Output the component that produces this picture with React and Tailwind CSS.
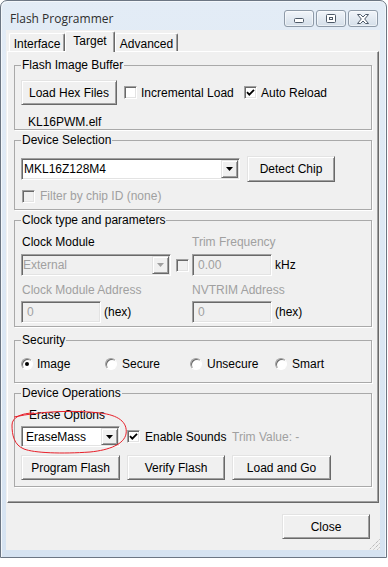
import React from "react";

const raised =
  "bg-[#f0f0f0] border border-t-[#e3e3e3] border-l-[#e3e3e3] border-r-[#696969] border-b-[#696969] shadow-[inset_1px_1px_0_#ffffff,inset_-1px_-1px_0_#a0a0a0]";
const sunken =
  "border border-t-[#a0a0a0] border-l-[#a0a0a0] border-r-white border-b-white shadow-[inset_1px_1px_0_#696969,inset_-1px_-1px_0_#e3e3e3]";

function Button({ className = "", children }) {
  return (
    <div className={`flex items-center justify-center ${raised} ${className}`}>
      {children}
    </div>
  );
}

function Check({ checked = false, disabled = false }) {
  return (
    <div
      className={`w-[13px] h-[13px] shrink-0 flex items-center justify-center ${sunken} ${
        disabled ? "bg-[#f0f0f0]" : "bg-white"
      }`}
    >
      {checked && (
        <svg width="9" height="9" viewBox="0 0 9 9">
          <polyline
            points="1,4.2 3.3,6.6 8,1.8"
            fill="none"
            stroke="#000"
            strokeWidth="1.8"
          />
        </svg>
      )}
    </div>
  );
}

function Radio({ checked = false }) {
  return (
    <div className="w-[12px] h-[12px] shrink-0 rounded-full border border-t-[#a0a0a0] border-l-[#a0a0a0] border-r-white border-b-white shadow-[inset_1px_1px_0_#696969] bg-white flex items-center justify-center">
      {checked && <div className="w-[4px] h-[4px] rounded-full bg-black" />}
    </div>
  );
}

function Arrow({ disabled }) {
  return (
    <svg width="7" height="4" viewBox="0 0 7 4">
      <polygon points="0,0 7,0 3.5,4" fill={disabled ? "#a0a0a0" : "#000"} />
    </svg>
  );
}

function Combo({ className = "", text, disabled = false, pad = "pl-[2px]" }) {
  return (
    <div
      className={`flex ${sunken} ${
        disabled ? "bg-[#f0f0f0] text-[#a0a0a0]" : "bg-white text-black"
      } ${className}`}
    >
      <div className={`flex-1 flex items-center ${pad}`}>{text}</div>
      <div
        className={`w-[17px] my-[1px] mr-[1px] flex items-center justify-center ${raised}`}
      >
        <Arrow disabled={disabled} />
      </div>
    </div>
  );
}

function Input({ className = "", text }) {
  return (
    <div
      className={`flex items-center pl-[5px] bg-[#f0f0f0] text-[#a0a0a0] ${sunken} ${className}`}
    >
      {text}
    </div>
  );
}

function Group({ title, className = "", children }) {
  return (
    <fieldset
      className={`ml-[6px] w-[358px] min-w-0 border border-[#a9a9a9] shadow-[1px_1px_0_#ffffff] ${className}`}
    >
      <legend className="ml-[6px] px-[1px] leading-[14px]">{title}</legend>
      {children}
    </fieldset>
  );
}

function Cap({ children, pad = "" }) {
  return (
    <div
      className={`w-[30px] h-[17px] rounded-[3px] border border-[#8e9aa8] bg-linear-to-b from-[#f1f5fa] to-[#d4dee9] shadow-[inset_0_0_0_1px_rgba(255,255,255,0.55)] flex justify-center ${pad}`}
    >
      {children}
    </div>
  );
}

function Tab({ className = "", children, selected = false }) {
  return (
    <div
      className={`flex justify-center rounded-t-[2px] border-t border-l border-r border-t-white border-l-white border-r-[#696969] bg-[#f0f0f0] ${
        selected
          ? "relative z-10 h-[21px] -mb-[1px] pt-[2px] shadow-[inset_-1px_0_0_#a0a0a0]"
          : "h-[18px] pt-[3px] shadow-[inset_-1px_0_0_#a0a0a0]"
      } ${className}`}
    >
      {children}
    </div>
  );
}

export default function App() {
  return (
    <div className="relative w-[388px] h-[567px] bg-white font-['Liberation_Sans',Arial,sans-serif] text-[12px] leading-[14px] text-black">
      <div className="w-[387px] h-[558px] rounded-t-[7px] border border-[#6c7683] bg-linear-to-b from-[#e3ecf6] to-[#d6e3f1] shadow-[inset_1px_1px_0_#f3f7fb,inset_-1px_0_0_#f3f7fb] flex flex-col">
        {/* title bar */}
        <div className="h-[29px] flex justify-between">
          <div className="pl-[9px] pt-[11px] font-['Open_Sans',sans-serif] text-[12px] leading-[14px] text-[#2e2e2e]">
            Flash Programmer
          </div>
          <div className="mt-[9px] mr-[8px] flex gap-[2px]">
            <Cap pad="items-end pb-[3px]">
              <svg width="10" height="5" viewBox="0 0 10 5">
                <rect x="0.5" y="0.5" width="9" height="4" rx="1" fill="#fff" stroke="#4d5968" />
              </svg>
            </Cap>
            <Cap pad="items-center">
              <svg width="10" height="9" viewBox="0 0 10 9">
                <rect x="0.5" y="0.5" width="9" height="8" rx="1" fill="#fff" stroke="#4d5968" />
                <rect x="3.5" y="3.5" width="3" height="2" fill="none" stroke="#4d5968" />
              </svg>
            </Cap>
            <Cap pad="items-center">
              <svg width="12" height="10" viewBox="0 0 12 10">
                <polygon
                  points="0.5,0.5 3.5,0.5 6,3 8.5,0.5 11.5,0.5 7.7,5 11.5,9.5 8.5,9.5 6,7 3.5,9.5 0.5,9.5 4.3,5"
                  fill="#fff"
                  stroke="#4d5968"
                />
              </svg>
            </Cap>
          </div>
        </div>

        {/* client area */}
        <div className="relative ml-[5px] w-[374px] h-[520px] bg-[#f0f0f0] flex flex-col">
          {/* tabs */}
          <div className="h-[21px] pl-[3px] flex items-end">
            <Tab className="w-[56px]">Interface</Tab>
            <Tab className="w-[50px]" selected>
              Target
            </Tab>
            <Tab className="w-[63px]">Advanced</Tab>
          </div>

          {/* tab panel */}
          <div className="ml-[1px] w-[372px] h-[452px] border border-t-white border-l-white border-r-[#696969] border-b-[#696969] shadow-[inset_-1px_-1px_0_#a0a0a0] flex flex-col">
            <Group title="Flash Image Buffer" className="mt-[6px] h-[72px]">
              <div className="mt-[8px] ml-[6px] h-[25px] flex items-center">
                <Button className="w-[96px] h-[25px]">Load Hex Files</Button>
                <div className="ml-[7px] w-[120px] flex items-center">
                  <Check />
                  <span className="ml-[4px]">Incremental Load</span>
                </div>
                <div className="flex items-center">
                  <Check checked />
                  <span className="ml-[4px]">Auto Reload</span>
                </div>
              </div>
              <div className="mt-[10px] ml-[13px]">KL16PWM.elf</div>
            </Group>

            <Group title="Device Selection" className="mt-[3px] h-[77px]">
              <div className="mt-[9px] ml-[6px] h-[26px] flex items-center">
                <Combo className="w-[219px] h-[22px]" text="MKL16Z128M4" />
                <Button className="ml-[7px] w-[88px] h-[26px]">Detect Chip</Button>
              </div>
              <div className="mt-[7px] ml-[7px] h-[14px] flex items-center">
                <Check disabled />
                <span className="ml-[5px] text-[#a0a0a0]">Filter by chip ID (none)</span>
              </div>
            </Group>

            <Group title="Clock type and parameters" className="mt-[3px] h-[114px]">
              <div className="mt-[8px] ml-[7px] flex">
                <span className="w-[170px]">Clock Module</span>
                <span className="text-[#a0a0a0]">Trim Frequency</span>
              </div>
              <div className="mt-[5px] ml-[6px] h-[22px] flex items-center">
                <Combo className="w-[150px] h-[22px]" text="External" disabled pad="pl-[1px]" />
                <div className="ml-[5px]">
                  <Check disabled />
                </div>
                <Input className="ml-[3px] w-[80px] h-[22px]" text="0.00" />
                <span className="ml-[3px]">kHz</span>
              </div>
              <div className="mt-[7px] ml-[7px] flex text-[#a0a0a0]">
                <span className="w-[170px]">Clock Module Address</span>
                <span>NVTRIM Address</span>
              </div>
              <div className="mt-[4px] ml-[6px] h-[22px] flex items-center">
                <div className="w-[171px] flex items-center">
                  <Input className="w-[80px] h-[22px]" text="0" />
                  <span className="ml-[3px]">(hex)</span>
                </div>
                <Input className="w-[80px] h-[22px]" text="0" />
                <span className="ml-[3px]">(hex)</span>
              </div>
            </Group>

            <Group title="Security" className="mt-[6px] h-[50px]">
              <div className="mt-[10px] ml-[6px] h-[14px] flex items-center">
                <div className="w-[84px] flex items-center">
                  <Radio checked />
                  <span className="ml-[4px]">Image</span>
                </div>
                <div className="w-[85px] flex items-center">
                  <Radio />
                  <span className="ml-[5px]">Secure</span>
                </div>
                <div className="w-[85px] flex items-center">
                  <Radio />
                  <span className="ml-[5px]">Unsecure</span>
                </div>
                <div className="flex items-center">
                  <Radio />
                  <span className="ml-[5px]">Smart</span>
                </div>
              </div>
            </Group>

            <Group title="Device Operations" className="mt-[3px] h-[101px]">
              <div className="mt-[8px] ml-[14px]">Erase Options</div>
              <div className="mt-[4px] ml-[6px] h-[21px] flex items-center">
                <Combo className="w-[99px] h-[21px]" text="EraseMass" pad="pl-[4px]" />
                <div className="ml-[7px] w-[105px] flex items-center">
                  <Check checked />
                  <span className="ml-[5px]">Enable Sounds</span>
                </div>
                <span className="text-[#a0a0a0]">Trim Value: -</span>
              </div>
              <div className="mt-[8px] ml-[6px] h-[25px] flex">
                <Button className="w-[99px] h-[25px]">Program Flash</Button>
                <Button className="ml-[7px] w-[98px] h-[25px]">Verify Flash</Button>
                <Button className="ml-[7px] w-[99px] h-[25px]">Load and Go</Button>
              </div>
            </Group>
          </div>

          {/* close row */}
          <div className="mt-[11px] pr-[10px] flex justify-end">
            <Button className="w-[88px] h-[25px]">Close</Button>
          </div>

          {/* resize grip */}
          <svg
            className="absolute right-0 bottom-0"
            width="12"
            height="12"
            viewBox="0 0 12 12"
          >
            <g stroke="#a0a0a0" strokeWidth="1" strokeDasharray="1 1">
              <line x1="11.5" y1="1.5" x2="1.5" y2="11.5" />
              <line x1="11.5" y1="5.5" x2="5.5" y2="11.5" />
              <line x1="11.5" y1="9.5" x2="9.5" y2="11.5" />
            </g>
          </svg>
        </div>
      </div>

      {/* red annotation ellipse */}
      <svg
        className="absolute left-0 top-[400px] pointer-events-none"
        width="140"
        height="60"
        viewBox="0 0 140 60"
      >
        <path
          d="M 34 13 C 22 13, 12 17, 12 25 C 12 35, 14 45, 24 49 C 34 53, 62 54, 90 52 C 110 50, 124 44, 126 34 C 128 22, 118 15, 100 13 C 75 10, 42 11, 14 17"
          fill="none"
          stroke="#e8202a"
          strokeWidth="1"
        />
      </svg>
    </div>
  );
}
